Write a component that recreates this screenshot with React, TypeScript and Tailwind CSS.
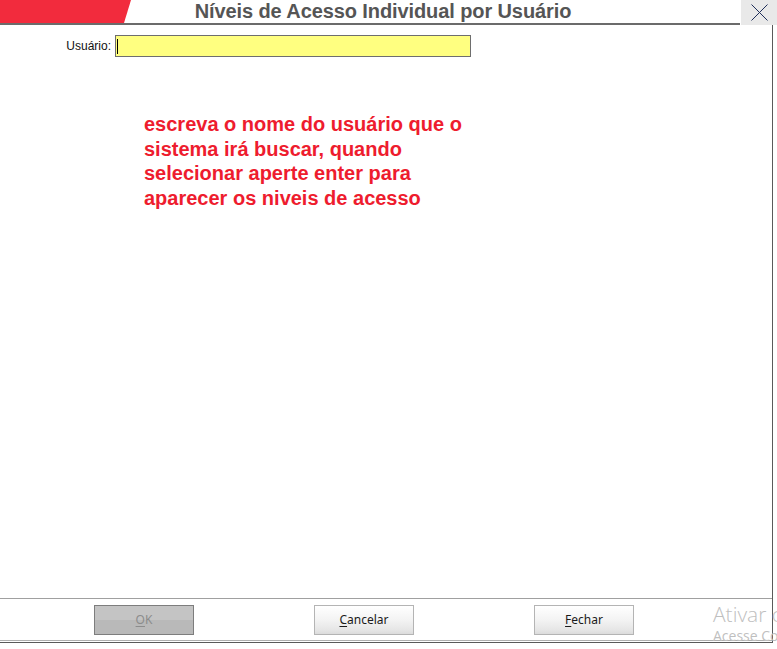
import React from "react";

function Btn({ under, rest, disabled }: { under: string; rest: string; disabled?: boolean }) {
  return (
    <div
      className={
        disabled
          ? "w-[100px] h-[30px] flex items-center justify-center border border-[#7d7d7d] bg-[linear-gradient(#c4c4c4,#c4c4c4_50%,#b9b9b9_50%,#b9b9b9)] text-[#8c8c8c] text-[12px]"
          : "w-[100px] h-[30px] flex items-center justify-center border border-[#b4b4b4] bg-[linear-gradient(#ffffff,#f3f3f3_50%,#e6e6e6_85%,#dcdcdc)] text-[#1a1a1a] text-[12px]"
      }
      style={{ fontFamily: '"Noto Sans", "Open Sans", sans-serif' }}
    >
      <span>
        <span className="underline underline-offset-2">{under}</span>
        {rest}
      </span>
    </div>
  );
}

export default function App() {
  return (
    <div className="relative w-[777px] h-[649px] bg-white overflow-hidden flex flex-col">
      {/* Title bar */}
      <div className="flex h-[25px] shrink-0">
        <div className="relative flex-1 border-b-2 border-[#6b6b6b] flex items-center justify-center">
          <div className="absolute left-0 top-0 h-[23px] w-[131px] bg-[#f22b3d] [clip-path:polygon(0_0,131px_0,124px_100%,0_100%)]" />
          <span
            className="font-bold text-[20px] tracking-[-0.1px] text-[#555555] leading-none ml-[26px] -mt-[2px]"
            style={{ fontFamily: '"Liberation Sans", Arial, sans-serif' }}
          >
            Níveis de Acesso Individual por Usuário
          </span>
        </div>
        <div className="w-[36px] ml-[1px] bg-[#e9e9e9] flex items-center justify-center">
          <svg width="19" height="19" viewBox="0 0 19 19">
            <path d="M1.5 1.5 L17.5 17.5 M17.5 1.5 L1.5 17.5" stroke="#1f2f5a" strokeWidth="1" />
          </svg>
        </div>
      </div>

      {/* Body */}
      <div className="h-[618px] shrink-0 flex flex-col w-[773px] border-r border-[#5a5a5a]">
        <div className="flex-1 flex flex-col">
          <div className="flex items-center mt-[10px] h-[22px]">
            <span
              className="w-[111px] text-right text-[12px] text-[#111]"
              style={{ fontFamily: '"Liberation Sans", Arial, sans-serif' }}
            >
              Usuário:
            </span>
            <div className="ml-[4px] w-[356px] h-[22px] border border-[#6e6e6e] bg-[#ffff80] flex items-center pl-[1px]">
              <div className="w-[1px] h-[15px] bg-black" />
            </div>
          </div>
          <div
            className="ml-[144px] mt-[55px] font-bold text-[#ee1c2e] text-[20px] leading-[24.5px]"
            style={{ fontFamily: '"Liberation Sans", Arial, sans-serif' }}
          >
            <div>escreva o nome do usuário que o</div>
            <div>sistema irá buscar, quando</div>
            <div>selecionar aperte enter para</div>
            <div>aparecer os niveis de acesso</div>
          </div>
        </div>
        {/* Footer */}
        <div className="h-[45px] shrink-0 border-t border-[#a0a0a0] flex flex-col">
          <div className="flex items-start pt-[6px] h-[41px]">
            <div className="ml-[94px]">
              <Btn under="O" rest="K" disabled />
            </div>
            <div className="ml-[120px]">
              <Btn under="C" rest="ancelar" />
            </div>
            <div className="ml-[120px]">
              <Btn under="F" rest="echar" />
            </div>
          </div>
          <div className="border-t border-[#b0b0b0] h-[2px]" />
          <div className="border-t border-[#5a5a5a]" />
        </div>
      </div>
      <div className="flex-1" />

      {/* Windows activation watermark */}
      <div
        className="absolute left-[713px] top-[604px] text-[#bfbfbf] leading-none"
        style={{ fontFamily: '"Open Sans", "Noto Sans", sans-serif' }}
      >
        <div className="text-[21px] font-light whitespace-nowrap">Ativar o Windows</div>
        <div className="text-[14px] mt-[4px] whitespace-nowrap">Acesse Configurações</div>
      </div>
    </div>
  );
}
